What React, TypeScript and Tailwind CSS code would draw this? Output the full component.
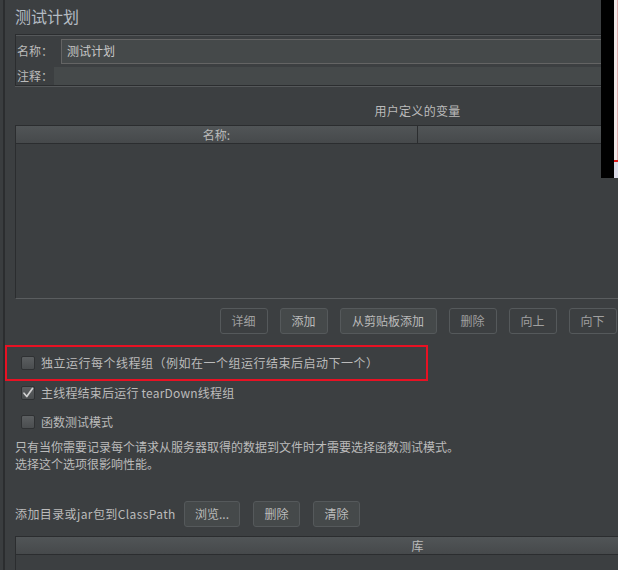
import React from 'react';

const font = { fontFamily: '"Noto Sans CJK SC", "Liberation Sans", sans-serif' };

function Btn({ label, enabled = false, w }: { label: string; enabled?: boolean; w: string }) {
  return (
    <div
      className={`${w} h-[26px] flex items-center justify-center rounded-[3px] border border-[#55595b] text-[12px] ${
        enabled ? 'bg-[#45494a] text-[#bbbbbb]' : 'bg-[#3c3f41] text-[#a0a0a0]'
      }`}
    >
      {label}
    </div>
  );
}

function Check({ checked = false }: { checked?: boolean }) {
  return (
    <div className="w-[14px] h-[14px] rounded-[2px] border border-[#2f3133] bg-gradient-to-b from-[#5c5f61] to-[#4a4d4f] flex items-center justify-center shrink-0">
      {checked && (
        <svg width="12" height="12" viewBox="0 0 12 12" fill="none">
          <path d="M2 6.2 L4.8 9.5 L10.5 1.5" stroke="#d0d0d0" strokeWidth="1.7" strokeLinecap="round" strokeLinejoin="round" />
        </svg>
      )}
    </div>
  );
}

export default function App() {
  return (
    <div className="relative w-[618px] h-[570px] overflow-hidden bg-[#3c3f41] text-[#bbbbbb] text-[12px] flex" style={font}>
      {/* left splitter */}
      <div className="w-[3px] bg-[#3a3d3f] shrink-0" />
      <div className="w-[2px] bg-[#2b2d2f] shrink-0" />

      <div className="pl-[10px] shrink-0 w-[820px]">
        {/* title */}
        <div className="h-[34px] pt-[6px] text-[16px] leading-[20px] text-[#b4bcc4]">测试计划</div>

        {/* name / comment box */}
        <div className="border border-[#2b2d2f] shadow-[inset_0_1px_0_#55585a,0_1px_0_#55585a] w-[805px]">
          <div className="flex items-center h-[31px] pl-[1px] pt-[1px]">
            <span className="w-[44px]">名称：</span>
            <div className="flex-1 h-[25px] bg-[#45494a] border border-[#646464] flex items-center pl-[5px] text-[#c8c8c8]">
              测试计划
            </div>
          </div>
          <div className="flex items-center h-[19px]">
            <span className="w-[38px] pl-[1px]">注释：</span>
            <div className="flex-1 h-[18px] bg-[#45494a]" />
          </div>
        </div>

        {/* user defined variables */}
        <div className="w-[805px] h-[39px] flex items-center justify-center pt-[10px] tracking-[0.3px]">用户定义的变量</div>
        <div className="w-[805px] h-[174px] border border-[#2b2d2f] border-b-[#5a5d5f] bg-[#3c3f41] flex flex-col">
          <div className="h-[18px] bg-gradient-to-b from-[#515557] to-[#46494b] border-b border-[#2b2d2f] flex">
            <div className="w-[402px] flex items-center justify-center border-r border-[#2b2d2f]">名称:</div>
            <div className="flex-1" />
          </div>
        </div>

        {/* buttons */}
        <div className="w-[805px] flex justify-center gap-[12px] pt-[9px] pl-[1px]">
          <Btn label="详细" w="w-[48px]" />
          <Btn label="添加" w="w-[48px]" enabled />
          <Btn label="从剪贴板添加" w="w-[97px]" enabled />
          <Btn label="删除" w="w-[48px]" />
          <Btn label="向上" w="w-[48px]" />
          <Btn label="向下" w="w-[48px]" />
        </div>

        {/* options */}
        <div className="relative -ml-[10px] mt-[11px] w-[423px] h-[36px] border-2 border-[#e81123] flex items-center pl-[14px] gap-[6px]">
          <Check />
          <span className="tracking-[0.5px]">独立运行每个线程组（例如在一个组运行结束后启动下一个）</span>
        </div>
        <div className="flex items-center gap-[6px] pl-[6px] h-[28px] mt-[-2px]">
          <Check checked />
          <span className="tracking-[0.2px]">主线程结束后运行 tearDown线程组</span>
        </div>
        <div className="flex items-center gap-[6px] pl-[6px] h-[30px]">
          <Check />
          <span>函数测试模式</span>
        </div>
        <div className="leading-[17px] pt-[1px]">
          <div>只有当你需要记录每个请求从服务器取得的数据到文件时才需要选择函数测试模式。</div>
          <div>选择这个选项很影响性能。</div>
        </div>

        {/* classpath */}
        <div className="flex items-center mt-[29px]">
          <span className="w-[169px] shrink-0 whitespace-nowrap tracking-[0.4px]">添加目录或jar包到ClassPath</span>
          <div className="flex gap-[13px]">
            <Btn label="浏览..." w="w-[56px]" enabled />
            <Btn label="删除" w="w-[47px]" enabled />
            <Btn label="清除" w="w-[47px]" enabled />
          </div>
        </div>
        <div className="mt-[9px] w-[805px] h-[40px] border border-[#2b2d2f]">
          <div className="h-[18px] bg-gradient-to-b from-[#515557] to-[#46494b] border-b border-[#2b2d2f] flex items-center justify-center">
            库
          </div>
        </div>
      </div>

      {/* overlapping window at the right edge */}
      <div className="absolute top-0 left-[601px] w-[13px] h-[178px] bg-black" />
      <div className="absolute top-0 left-[614px] w-[4px] h-[178px] bg-[#f4eaea] flex flex-col">
        <div className="h-[160px] border-r border-[#e0b0b0]" />
        <div className="h-[2px] bg-[#e02020]" />
        <div className="flex-1 bg-[#dcdce8]" />
      </div>
    </div>
  );
}
